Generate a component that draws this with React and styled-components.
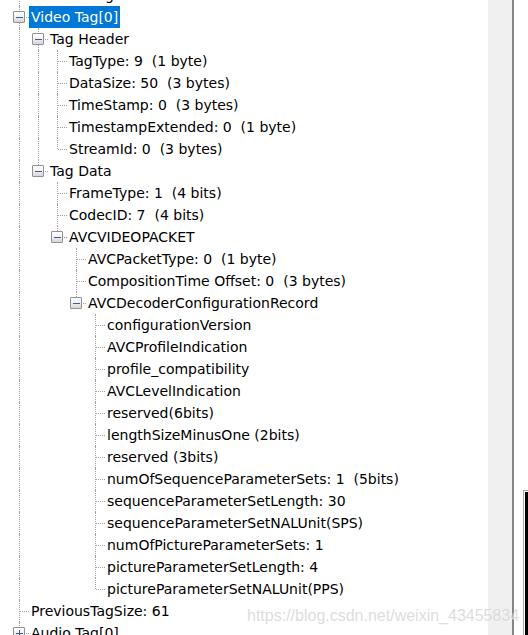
import React from "react";
import styled, { createGlobalStyle, css } from "styled-components";

const Global = createGlobalStyle`
  html, body { margin: 0; padding: 0; background: #fff; }
  body { width: 528px; height: 635px; overflow: hidden; }
  #root { height: 635px; }
`;

const CELL = 19;
const ROW = 22;

const Window = styled.div`
  position: relative;
  display: flex;
  width: 528px;
  height: 635px;
  overflow: hidden;
  background: #fff;
`;

const TreePane = styled.div`
  width: 488px;
  height: 100%;
  overflow: hidden;
  background: #fff;
`;

const TreeList = styled.div`
  margin-top: -16px;
  padding-left: 10px;
  display: flex;
  flex-direction: column;
`;

const Row = styled.div`
  display: flex;
  align-items: stretch;
  height: ${ROW}px;
`;

const dotV = css`
  content: "";
  position: absolute;
  left: 9px;
  width: 0;
  border-left: 1px dotted #a0a0a0;
`;

const Guide = styled.span`
  position: relative;
  flex: none;
  width: ${CELL}px;
  height: ${ROW}px;
  ${(p) =>
    p.$line &&
    css`
      &::before {
        ${dotV};
        top: 0;
        height: ${ROW}px;
      }
    `}
`;

const Connector = styled.span`
  position: relative;
  flex: none;
  width: ${CELL}px;
  height: ${ROW}px;
  &::before {
    ${dotV};
    top: 0;
    height: ${(p) => (p.$last ? 11 : ROW)}px;
  }
  &::after {
    content: "";
    position: absolute;
    left: 10px;
    right: 0;
    top: 11px;
    border-top: 1px dotted #a0a0a0;
  }
`;

const Expander = styled.span`
  position: absolute;
  z-index: 1;
  left: 3px;
  top: 5px;
  width: 10px;
  height: 10px;
  border: 1px solid #919191;
  border-radius: 1px;
  background: linear-gradient(#ffffff, #f2f2f2 45%, #d6d6d6);
  box-sizing: content-box;
  &::before {
    content: "";
    position: absolute;
    left: 2px;
    right: 1px;
    top: 5px;
    height: 1px;
    background: #3d5a99;
  }
  ${(p) =>
    !p.$open &&
    css`
      &::after {
        content: "";
        position: absolute;
        top: 2px;
        bottom: 1px;
        left: 5px;
        width: 1px;
        background: #3d5a99;
      }
    `}
`;

const Label = styled.span`
  flex: none;
  height: ${ROW}px;
  padding: 1px 2px 0 2px;
  box-sizing: border-box;
  font-family: "DejaVu Sans", sans-serif;
  font-size: 14px;
  line-height: 21px;
  white-space: pre;
  color: ${(p) => (p.$selected ? "#ffffff" : "#000000")};
  background: ${(p) => (p.$selected ? "#0078d7" : "transparent")};
`;

const Strip = styled.div`
  flex: none;
  width: 24px;
  height: 100%;
  background: #f0f0f0;
  border-right: 2px solid #858585;
`;

const SidePane = styled.div`
  flex: 1;
  display: flex;
  flex-direction: column;
  justify-content: flex-end;
  background: #fff;
`;

const EdgeFrame = styled.div`
  margin-left: 9px;
  height: 143px;
  border-top: 1px solid #a8a8a8;
  border-left: 1px solid #a8a8a8;
  padding: 1px 0 0 1px;
  display: flex;
`;

const EdgeInner = styled.div`
  flex: 1;
  border-top: 3px solid #000;
  border-left: 3px solid #000;
`;

const Watermark = styled.div`
  position: absolute;
  left: 247px;
  top: 607px;
  font-family: "Liberation Sans", Arial, sans-serif;
  font-size: 16px;
  color: rgba(205, 205, 205, 0.7);
  text-shadow: 1px 1px 0 rgba(255, 255, 255, 0.6);
  white-space: nowrap;
  pointer-events: none;
`;

const leaf = (label) => ({ label });

const tree = [
  leaf("PreviousTagSize: 364"),
  {
    label: "Video Tag[0]",
    selected: true,
    open: true,
    children: [
      {
        label: "Tag Header",
        open: true,
        children: [
          leaf("TagType: 9  (1 byte)"),
          leaf("DataSize: 50  (3 bytes)"),
          leaf("TimeStamp: 0  (3 bytes)"),
          leaf("TimestampExtended: 0  (1 byte)"),
          leaf("StreamId: 0  (3 bytes)"),
        ],
      },
      {
        label: "Tag Data",
        open: true,
        children: [
          leaf("FrameType: 1  (4 bits)"),
          leaf("CodecID: 7  (4 bits)"),
          {
            label: "AVCVIDEOPACKET",
            open: true,
            children: [
              leaf("AVCPacketType: 0  (1 byte)"),
              leaf("CompositionTime Offset: 0  (3 bytes)"),
              {
                label: "AVCDecoderConfigurationRecord",
                open: true,
                children: [
                  leaf("configurationVersion"),
                  leaf("AVCProfileIndication"),
                  leaf("profile_compatibility"),
                  leaf("AVCLevelIndication"),
                  leaf("reserved(6bits)"),
                  leaf("lengthSizeMinusOne (2bits)"),
                  leaf("reserved (3bits)"),
                  leaf("numOfSequenceParameterSets: 1  (5bits)"),
                  leaf("sequenceParameterSetLength: 30"),
                  leaf("sequenceParameterSetNALUnit(SPS)"),
                  leaf("numOfPictureParameterSets: 1"),
                  leaf("pictureParameterSetLength: 4"),
                  leaf("pictureParameterSetNALUnit(PPS)"),
                ],
              },
            ],
          },
        ],
      },
    ],
  },
  leaf("PreviousTagSize: 61"),
  { label: "Audio Tag[0]", open: false, children: [leaf("Tag Header")] },
  leaf("PreviousTagSize: 0"),
];

function flatten(nodes, guides = [], out = []) {
  nodes.forEach((n, i) => {
    const last = i === nodes.length - 1;
    out.push({ ...n, guides, last });
    if (n.children && n.open) flatten(n.children, [...guides, !last], out);
  });
  return out;
}

const rows = flatten(tree);

export default function App() {
  return (
    <>
      <Global />
      <Window>
        <TreePane>
          <TreeList>
            {rows.map((r, i) => (
              <Row key={i}>
                {r.guides.map((g, j) => (
                  <Guide key={j} $line={g} />
                ))}
                <Connector $last={r.last}>
                  {r.children && <Expander $open={r.open} />}
                </Connector>
                <Label $selected={r.selected}>{r.label}</Label>
              </Row>
            ))}
          </TreeList>
        </TreePane>
        <Strip />
        <SidePane>
          <EdgeFrame>
            <EdgeInner />
          </EdgeFrame>
        </SidePane>
        <Watermark>https://blog.csdn.net/weixin_43455834</Watermark>
      </Window>
    </>
  );
}
